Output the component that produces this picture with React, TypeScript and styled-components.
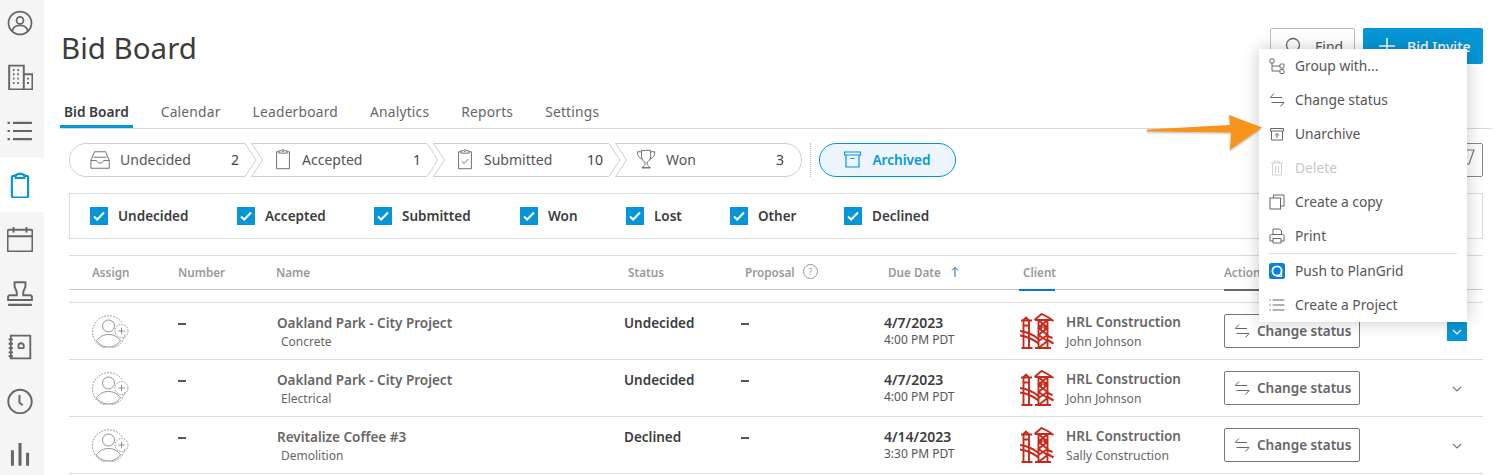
import React from 'react';
import styled, { createGlobalStyle } from 'styled-components';

const GlobalStyle = createGlobalStyle`
  html, body { margin: 0; padding: 0; background: #fff; }
  body { font-family: "Noto Sans", "Open Sans", sans-serif; color: #3c3c3c; }
`;

type IconProps = { size?: number; color?: string; width?: number };

const Svg: React.FC<IconProps & { vb?: number; children: React.ReactNode }> = ({ size = 24, color = '#666', width = 1, vb = 24, children }) => (
  <svg width={size} height={size} viewBox={`0 0 ${vb} ${vb}`} fill="none" stroke={color} strokeWidth={width} style={{ display: 'block', flex: 'none' }}>
    {children}
  </svg>
);

// side navigation
const UserNav = () => (
  <Svg size={26} width={1.6}>
    <circle cx="12" cy="12" r="10.6" />
    <circle cx="12" cy="9.6" r="3.2" />
    <path d="M4.8 19.6c.6-3.6 3.4-5.4 7.2-5.4s6.600 1.800 7.200 5.400" />
  </Svg>
);
const BuildingNav = () => (
  <Svg size={26} width={1.8}>
    <path d="M2 23.500V1.500h13.500v22zM15.500 9.500H23.500v14h-8" />
    <path d="M5.500 5.500h1.500M9.500 5.500h1.500M5.500 9.500h1.500M9.500 9.500h1.500M5.500 13.500h1.500M9.500 13.500h1.500M5.500 17.500h1.500M9.500 17.500h1.500M18.500 13.500h1.800M18.500 17.500h1.800" />
  </Svg>
);
const ListNav = ({ size = 26, width = 2 }: IconProps) => (
  <Svg size={size} width={width}>
    <path d="M.5 4.500h2.200M.5 12h2.200M.5 19.500h2.200M5.500 4.500H23M5.500 12H23M5.500 19.500H23" />
  </Svg>
);
const ClipboardNav = () => (
  <Svg size={26} color="#0696d7" width={2}>
    <path d="M8 3.500H6a1.500 1.500 0 0 0-1.500 1.500v17a1.500 1.500 0 0 0 1.500 1.500h12a1.500 1.500 0 0 0 1.500-1.500V5A1.500 1.500 0 0 0 18 3.500h-2" />
    <path d="M8 5.500V3l2.500-1.200h3L16 3v2.500z" />
  </Svg>
);
const CalendarNav = () => (
  <Svg size={26} width={1.8}>
    <rect x=".5" y="3.500" width="23" height="20" rx="1.500" />
    <path d="M.5 9.500h23M6 1v5M18 1v5" />
  </Svg>
);
const StampNav = () => (
  <Svg size={26} width={1.8}>
    <path d="M7 2h10v3.500c0 2.500-2 3.500-2 6V14h6.500c1 0 1.500.8 1.500 1.800v2.700H1v-2.700C1 14.800 1.500 14 2.500 14H9v-2.500c0-2.500-2-3.500-2-6z" />
    <path d="M1 23h22" strokeWidth="2.200" />
  </Svg>
);
const BookNav = () => (
  <Svg size={26} width={1.7}>
    <path d="M3.500 1.500h18v21h-18z" />
    <path d="M1.500 5h4M1.500 9h4M1.500 13h4M1.500 17h4M1.500 20.500h4" />
    <path d="M10.500 12.500V11a2.500 2.500 0 0 1 5 0v1.500M10 13h6" />
  </Svg>
);
const ClockNav = () => (
  <Svg size={26} width={1.8}>
    <circle cx="12" cy="12.500" r="10.800" />
    <path d="M11.500 6.500v7l3 2.500" />
  </Svg>
);
const BarsNav = () => (
  <Svg size={26} width={2.800}>
    <path d="M5 22V7.500M12 22V1M19 22V10" />
  </Svg>
);

const navItems = [
  { id: 'user', icon: <UserNav /> },
  { id: 'building', icon: <BuildingNav /> },
  { id: 'list', icon: <ListNav /> },
  { id: 'board', icon: <ClipboardNav />, active: true },
  { id: 'calendar', icon: <CalendarNav /> },
  { id: 'stamp', icon: <StampNav /> },
  { id: 'book', icon: <BookNav /> },
  { id: 'clock', icon: <ClockNav /> },
  { id: 'bars', icon: <BarsNav /> },
];

// stage icons
const InboxIcon = () => (
  <Svg size={22} width={1}>
    <path d="M1 21h20v-8.500l-4-9.500H5l-4 9.500zM1 12.500h6c1 2 2 2.800 4 2.800s3-.8 4-2.800h6M4 9H18" />
  </Svg>
);
const ClipIcon = ({ check }: { check?: boolean }) => (
  <Svg size={22} width={1}>
    <path d="M7.500 3H5v18.500h14V3h-2.500" />
    <path d="M7.500 4.500V2H10l.8-1h2.400l.8 1h2.500v2.500zM11 2.500h2" />
    {check && <path d="M8.500 13.500l2.500 2.500 4.500-5" />}
  </Svg>
);
const TrophyIcon = () => (
  <Svg size={22} width={1}>
    <path d="M6 1.500h10v6.500c0 3.500-2 5.500-3.800 6.200v2.800l3.300 3.500H6.500l3.300-3.500v-2.800C8 13.500 6 11.500 6 8z" />
    <path d="M6 3H1.500c0 4 1.500 7 5.500 8M16 3h4.500c0 4-1.500 7-5.500 8M6.500 20.500h9" />
  </Svg>
);
const ArchiveIcon = () => (
  <Svg size={17} color="#0696d7" vb={17} width={1.200}>
    <path d="M.5 1h16v3H.5zM2 4v12h13V4M6.500 7.500h4" />
  </Svg>
);

// menu and buttons
const SwapIcon = () => (
  <Svg size={16} vb={16} width={1}>
    <path d="M13 5.500H1.500M5 1.500L1.200 5.500M2.500 10.500h12.500M11.500 14.500l3.500-4" />
  </Svg>
);
const GroupIcon = () => (
  <Svg size={16} vb={16} width={1}>
    <rect x="1" y="1" width="4" height="4" rx=".8" />
    <rect x="11" y="6" width="4" height="4" rx=".8" />
    <rect x="11" y="11.500" width="4" height="4" rx=".8" />
    <path d="M3 5v8h8M3 8h8" />
  </Svg>
);
const UnarchiveIcon = () => (
  <Svg size={16} vb={16} width={1}>
    <path d="M1.500 2.500h13v2.500h-13zM2.500 5v9h11V5M8 12V7.500M6 9.500l2-2 2 2" />
  </Svg>
);
const TrashIcon = () => (
  <Svg size={16} vb={16} color="#d2d2d2" width={1}>
    <path d="M2 3h12M5.500 3V1.200h5V3M3.500 3v12h9V3M6.500 5.500V13M9.500 5.500V13" />
  </Svg>
);
const CopyIcon = () => (
  <Svg size={16} vb={16} width={1}>
    <rect x="1" y="4" width="10.500" height="11" />
    <path d="M4.500 4V1H15v11h-3.500" />
  </Svg>
);
const PrintIcon = () => (
  <Svg size={16} vb={16} width={1}>
    <path d="M4 6.500V1h6.500L12.500 3v3.500M4 13H1v-5c0-1 .6-1.500 1.500-1.500h11c.9 0 1.500.5 1.500 1.500v5h-3M4 10.500h8V15H4z" />
  </Svg>
);
const PlanGridIcon = () => (
  <svg width="16" height="16" viewBox="0 0 16 16" style={{ display: 'block', flex: 'none' }}>
    <rect width="16" height="16" rx="2.500" fill="#0b7fde" />
    <circle cx="8" cy="8" r="4.600" fill="none" stroke="#fff" strokeWidth="1.800" />
    <path d="M12.500 8v5.500H8" fill="none" stroke="#fff" strokeWidth="1.200" />
  </svg>
);

// bridge logo for the client column
const BridgeLogo = () => (
  <LogoSvg width="34" height="36" viewBox="0 0 34 36" fill="none" stroke="#c62a1c" strokeWidth="1.900">
    <path d="M1 7.500h11M3 7.500l3-3 3 3M3.500 7.500V35M9 7.500V35M1.500 35h11M3.500 12.500H9" />
    <path d="M14.500 7l7-6 7 3.500 5 3.500M15 7h17M18.500 7v28M27.500 7v28M15 35h16M18.500 7l9 8-9 7 9 6-9 7M27.500 7l-9 8 9 7-9 6" />
    <path d="M0 18c6 .8 13 3.500 18.500 8M0 22.500c6 .8 13 3.500 18.500 8M27.500 27l6 3.500M27.500 23l5 2" strokeWidth="2.100" />
    <circle cx="20.500" cy="14" r="1.400" />
    <circle cx="25.500" cy="14" r="1.400" />
  </LogoSvg>
);

// dashed avatar with a plus badge
const AssignIcon = () => (
  <svg width="37" height="34" viewBox="0 0 37 34" fill="none" stroke="#777" strokeWidth=".8" style={{ display: 'block', flex: 'none' }}>
    <path d="M30 8.500A16.300 16.300 0 1 0 32.800 21" strokeDasharray="1.800 1.200" />
    <circle cx="29.500" cy="17" r="6.500" strokeDasharray="1.500 1.200" />
    <path d="M29.500 13.800v6.400M26.300 17h6.400" />
    <circle cx="16.500" cy="12" r="6" />
    <path d="M4.500 27c3-4.500 7-6.500 12-6.500s9 2 12 6.500c-3.500 4-7 6-12 6s-8.500-2-12-6z" />
  </svg>
);

const stages = [
  { label: 'Undecided', count: '2', width: 188, icon: <InboxIcon />, kind: 'first' as const },
  { label: 'Accepted', count: '1', width: 188, icon: <ClipIcon />, kind: 'mid' as const },
  { label: 'Submitted', count: '10', width: 188, icon: <ClipIcon check />, kind: 'mid' as const },
  { label: 'Won', count: '3', width: 187, icon: <TrophyIcon />, kind: 'last' as const },
];

const filters = [
  { label: 'Undecided', gap: 119 },
  { label: 'Accepted', gap: 109 },
  { label: 'Submitted', gap: 118 },
  { label: 'Won', gap: 78 },
  { label: 'Lost', gap: 76 },
  { label: 'Other', gap: 86 },
  { label: 'Declined', gap: 0 },
];

const tabs = ['Bid Board', 'Calendar', 'Leaderboard', 'Analytics', 'Reports', 'Settings'];

const rows = [
  { name: 'Oakland Park - City Project', trade: 'Concrete', status: 'Undecided', date: '4/7/2023', time: '4:00 PM PDT', contact: 'John Johnson', open: true },
  { name: 'Oakland Park - City Project', trade: 'Electrical', status: 'Undecided', date: '4/7/2023', time: '4:00 PM PDT', contact: 'John Johnson' },
  { name: 'Revitalize Coffee #3', trade: 'Demolition', status: 'Declined', date: '4/14/2023', time: '3:30 PM PDT', contact: 'Sally Construction' },
];

const menuItems = [
  { label: 'Group with...', icon: <GroupIcon /> },
  { label: 'Change status', icon: <SwapIcon /> },
  { label: 'Unarchive', icon: <UnarchiveIcon /> },
  { label: 'Delete', icon: <TrashIcon />, disabled: true },
  { label: 'Create a copy', icon: <CopyIcon /> },
  { label: 'Print', icon: <PrintIcon />, divider: true },
  { label: 'Push to PlanGrid', icon: <PlanGridIcon /> },
  { label: 'Create a Project', icon: <ListNav size={16} width={1.600} /> },
];

const stagePath = (kind: 'first' | 'mid' | 'last', w: number) => {
  const h = 33.5;
  if (kind === 'first') return `M17 .5H${w - 12}L${w - 1} 17 ${w - 12} ${h}H17A16.500 16.500 0 0 1 17 .5Z`;
  if (kind === 'last') return `M.5 .5H${w - 17}A16.500 16.500 0 0 1 ${w - 17} ${h}H.5L11.500 17Z`;
  return `M.5 .5H${w - 12}L${w - 1} 17 ${w - 12} ${h}H.5L11.500 17Z`;
};

const App: React.FC = () => (
  <>
    <GlobalStyle />
    <Page>
      <SideNav>
        {navItems.map((item) => (
          <NavItem key={item.id} $active={item.active}>
            {item.icon}
          </NavItem>
        ))}
      </SideNav>
      <Main>
        <Header>
          <Title>Bid Board</Title>
          <HeaderActions>
            <FindButton>
              <Svg size={18} vb={18} width={1.300}>
                <circle cx="8" cy="8" r="6.500" />
                <path d="M13 13l4 4" />
              </Svg>
              Find
            </FindButton>
            <InviteButton>
              <Svg size={18} vb={18} color="#fff" width={1.500}>
                <path d="M9 1v16M1 9h16" />
              </Svg>
              Bid Invite
            </InviteButton>
          </HeaderActions>
        </Header>
        <Tabs>
          {tabs.map((tab, i) => (
            <Tab key={tab} $active={i === 0}>
              {tab}
            </Tab>
          ))}
        </Tabs>
        <Content>
          <StageRow>
            <Stages>
              {stages.map((s) => (
                <Stage key={s.label} $width={s.width}>
                  <StageOutline width={s.width} height="34" viewBox={`0 0 ${s.width} 34`}>
                    <path d={stagePath(s.kind, s.width)} fill="#fff" stroke="#cfcfcf" />
                  </StageOutline>
                  <StageIcon>{s.icon}</StageIcon>
                  <StageLabel>{s.label}</StageLabel>
                  <StageCount>{s.count}</StageCount>
                </Stage>
              ))}
            </Stages>
            <DottedRule />
            <ArchivedPill>
              <ArchiveIcon />
              Archived
            </ArchivedPill>
            <FilterButton>
              <Svg size={24} vb={24} width={1.200} color="#777">
                <path d="M1 2h22l-5 14h-5v6h-2v-6H6z" />
              </Svg>
            </FilterButton>
          </StageRow>
          <FilterBox>
            {filters.map((f) => (
              <FilterItem key={f.label} $gap={f.gap}>
                <CheckBox>
                  <svg width="12" height="10" viewBox="0 0 12 10" fill="none" stroke="#fff" strokeWidth="2">
                    <path d="M1 5.500l3.200 3L11 1.500" />
                  </svg>
                </CheckBox>
                <FilterLabel>{f.label}</FilterLabel>
              </FilterItem>
            ))}
          </FilterBox>
          <TableHead>
            <HeadCell>Assign</HeadCell>
            <HeadCell>Number</HeadCell>
            <HeadCell>Name</HeadCell>
            <HeadCell>Status</HeadCell>
            <HeadCell>
              Proposal
              <HelpMark>?</HelpMark>
            </HeadCell>
            <HeadCell>
              Due Date
              <Svg size={12} vb={12} color="#0a6fc2" width={1}>
                <path d="M6 11V1.500M3 4.500l3-3 3 3" />
              </Svg>
            </HeadCell>
            <HeadCell $underline="#0a78c8">Client</HeadCell>
            <HeadCell $underline="#666">Action</HeadCell>
          </TableHead>
          <TableBody>
            {rows.map((r) => (
              <Row key={r.trade}>
                <AssignIcon />
                <Dash />
                <TextStack>
                  <RowTitle>{r.name}</RowTitle>
                  <RowSub>{r.trade}</RowSub>
                </TextStack>
                <StatusText>{r.status}</StatusText>
                <Dash />
                <TextStack>
                  <DateText>{r.date}</DateText>
                  <TimeText>{r.time}</TimeText>
                </TextStack>
                <ClientCell>
                  <BridgeLogo />
                  <ClientStack>
                    <RowTitle>HRL Construction</RowTitle>
                    <ContactText>{r.contact}</ContactText>
                  </ClientStack>
                </ClientCell>
                <ActionCell>
                  <ChangeButton>
                    <SwapIcon />
                    Change status
                  </ChangeButton>
                  <Expander $open={r.open}>
                    <svg width="10" height="6" viewBox="0 0 10 6" fill="none" stroke={r.open ? '#fff' : '#777'} strokeWidth="1.200">
                      <path d="M1 1l4 4 4-4" />
                    </svg>
                  </Expander>
                </ActionCell>
              </Row>
            ))}
          </TableBody>
        </Content>
      </Main>
      <Menu>
        {menuItems.map((m) => (
          <MenuItem key={m.label} $disabled={m.disabled} $divider={m.divider}>
            {m.icon}
            <MenuLabel>{m.label}</MenuLabel>
          </MenuItem>
        ))}
      </Menu>
      <Pointer width="122" height="42" viewBox="0 0 122 42">
        <defs>
          <filter id="arrow-shadow" x="-5%" y="-10%" width="110%" height="125%">
            <feDropShadow dx="0" dy="1" stdDeviation="1" floodColor="#000" floodOpacity=".3" />
          </filter>
        </defs>
        <path d="M1 17.500L84 13 83 3 116 15.500 84 38 85 20.500 1 19.500Z" fill="#f7941d" filter="url(#arrow-shadow)" />
      </Pointer>
    </Page>
  </>
);

export default App;

const Page = styled.div`
  position: relative;
  display: flex;
  width: 1506px;
  height: 475px;
  overflow: hidden;
  background: #fff;
`;

const SideNav = styled.nav`
  flex: none;
  width: 44px;
  margin-top: -4px;
  background: #f5f5f5;
`;

const NavItem = styled.div<{ $active?: boolean }>`
  display: flex;
  align-items: center;
  justify-content: center;
  height: 54px;
  padding-right: 4px;
  box-sizing: border-box;
  background: ${(p) => (p.$active ? '#fff' : 'transparent')};
`;

const Main = styled.main`
  flex: none;
  width: 1448px;
  padding-left: 16px;
  box-sizing: border-box;
`;

const Header = styled.header`
  display: flex;
  align-items: flex-start;
  justify-content: space-between;
  width: 1423px;
  height: 96px;
  padding-top: 28px;
  box-sizing: border-box;
`;

const Title = styled.h1`
  margin: 0 0 0 1px;
  font-size: 29.5px;
  font-weight: 400;
  line-height: 40px;
  color: #3c3c3c;
`;

const HeaderActions = styled.div`
  display: flex;
  gap: 8px;
`;

const FindButton = styled.button`
  display: flex;
  align-items: center;
  gap: 12px;
  width: 85px;
  height: 36px;
  padding: 0 14px;
  box-sizing: border-box;
  border: 1px solid #bbb;
  border-radius: 2px;
  background: #fff;
  color: #555;
  font: 400 14px "Noto Sans", sans-serif;
  white-space: nowrap;
`;

const InviteButton = styled.button`
  display: flex;
  align-items: center;
  gap: 11px;
  width: 120px;
  height: 36px;
  padding: 0 15px;
  box-sizing: border-box;
  border: none;
  border-radius: 2px;
  background: #0696d7;
  color: #fff;
  font: 500 14px "Noto Sans", sans-serif;
  white-space: nowrap;
`;

const Tabs = styled.div`
  display: flex;
  width: 1432px;
  height: 33px;
  box-sizing: border-box;
  border-bottom: 1px solid #d8d8d8;
`;

const Tab = styled.div<{ $active?: boolean }>`
  height: 32px;
  margin-right: 24px;
  padding: 0 4px;
  box-sizing: border-box;
  border-bottom: 3px solid ${(p) => (p.$active ? '#0696d7' : 'transparent')};
  font-size: ${(p) => (p.$active ? 13.7 : 13.8)}px;
  font-weight: ${(p) => (p.$active ? 600 : 400)};
  line-height: 32px;
  letter-spacing: ${(p) => (p.$active ? 0 : 0.2)}px;
  color: ${(p) => (p.$active ? '#3c3c3c' : '#666')};
`;

const Content = styled.div`
  width: 1414px;
  margin-left: 9px;
`;

const StageRow = styled.div`
  display: flex;
  align-items: center;
  height: 34px;
  margin-top: 14px;
`;

const Stages = styled.div`
  display: flex;
  width: 733px;
`;

const Stage = styled.div<{ $width: number }>`
  position: relative;
  display: flex;
  align-items: center;
  flex: none;
  width: ${(p) => p.$width}px;
  height: 34px;
  margin-right: -6px;
  padding-left: 21px;
  padding-right: 18px;
  box-sizing: border-box;
`;

const StageOutline = styled.svg`
  position: absolute;
  top: 0;
  left: 0;
`;

const StageIcon = styled.span`
  position: relative;
  margin-right: 8px;
`;

const StageLabel = styled.span`
  position: relative;
  flex: 1;
  padding-bottom: 2px;
  font-size: 14px;
  color: #555;
`;

const StageCount = styled.span`
  position: relative;
  padding-bottom: 2px;
  font-size: 14px;
  color: #444;
`;

const DottedRule = styled.div`
  width: 0;
  height: 34px;
  margin-left: 8px;
  border-left: 1px dotted #bbb;
`;

const ArchivedPill = styled.button`
  display: flex;
  align-items: center;
  justify-content: center;
  gap: 11px;
  width: 137px;
  height: 34px;
  margin-left: 8px;
  padding: 0 0 1px;
  box-sizing: border-box;
  border: 1px solid #0696d7;
  border-radius: 17px;
  background: #edf6fd;
  color: #0696d7;
  font: 600 13.6px "Noto Sans", sans-serif;
`;

const FilterButton = styled.div`
  display: flex;
  align-items: center;
  justify-content: center;
  width: 40px;
  height: 34px;
  margin-left: auto;
  box-sizing: border-box;
  border: 1px solid #888;
  border-radius: 2px;
`;

const FilterBox = styled.div`
  display: flex;
  align-items: center;
  height: 46px;
  margin-top: 16px;
  padding-left: 20px;
  box-sizing: border-box;
  border: 1px solid #ddd;
`;

const FilterItem = styled.div<{ $gap: number }>`
  display: flex;
  align-items: center;
  gap: 10px;
  width: ${(p) => (p.$gap ? `${p.$gap + 28}px` : 'auto')};
`;

const FilterLabel = styled.span`
  padding-bottom: 1px;
  font-size: 13.5px;
  font-weight: 600;
  color: #3c3c3c;
`;

const CheckBox = styled.span`
  display: flex;
  align-items: center;
  justify-content: center;
  flex: none;
  width: 18px;
  height: 18px;
  background: #0696d7;
`;

const TableHead = styled.div`
  display: grid;
  grid-template-columns: 86px 98px 352px 117px 143px 135px 201px 1fr;
  height: 35px;
  margin-top: 16px;
  padding-left: 23px;
  box-sizing: border-box;
  border-top: 1px solid #ddd;
  border-bottom: 1px solid #ccc;
`;

const HeadCell = styled.div<{ $underline?: string }>`
  position: relative;
  display: flex;
  align-items: center;
  gap: 8px;
  padding-bottom: 2px;
  font-size: 11.7px;
  font-weight: 600;
  color: #999;

  &::after {
    content: '';
    display: ${(p) => (p.$underline ? 'block' : 'none')};
    position: absolute;
    left: ${(p) => (p.$underline === '#666' ? 0 : -4)}px;
    bottom: -2px;
    width: ${(p) => (p.$underline === '#666' ? 130 : 36)}px;
    height: 2px;
    background: ${(p) => p.$underline};
  }
`;

const HelpMark = styled.span`
  display: flex;
  align-items: center;
  justify-content: center;
  width: 13px;
  height: 13px;
  border: 1px solid #999;
  border-radius: 50%;
  font-size: 9px;
  font-weight: 400;
`;

const TableBody = styled.div`
  margin-top: 12px;
  border-top: 1px solid #ddd;
`;

const Row = styled.div`
  display: grid;
  grid-template-columns: 86px 99px 347px 117px 143px 136px 204px 1fr;
  align-items: start;
  height: 57px;
  padding-left: 23px;
  padding-top: 11px;
  box-sizing: border-box;
  border-bottom: 1px solid #ddd;
`;

const Dash = styled.div`
  width: 8px;
  height: 2px;
  margin-top: 9px;
  background: #555;
`;

const TextStack = styled.div`
  margin-top: -1px;
`;

const ClientStack = styled.div`
  margin-top: -2px;
`;

const RowTitle = styled.div`
  font-size: 13.5px;
  font-weight: 600;
  line-height: 20px;
  white-space: nowrap;
  color: #666;
`;

const RowSub = styled.div`
  margin-left: 4px;
  font-size: 12px;
  line-height: 18px;
  color: #666;
`;

const StatusText = styled.div`
  margin-top: -1px;
  font-size: 13.5px;
  font-weight: 600;
  line-height: 20px;
  color: #3c3c3c;
`;

const DateText = styled.div`
  font-size: 14px;
  font-weight: 600;
  line-height: 20px;
  color: #3c3c3c;
`;

const TimeText = styled.div`
  font-size: 12px;
  line-height: 14px;
  color: #555;
`;

const ClientCell = styled.div`
  display: flex;
  gap: 12px;
`;

const LogoSvg = styled.svg`
  display: block;
  flex: none;
  margin-top: -1px;
`;

const ContactText = styled.div`
  font-size: 12.2px;
  line-height: 19px;
  white-space: nowrap;
  color: #666;
`;

const ActionCell = styled.div`
  display: flex;
  align-items: flex-start;
  justify-content: space-between;
  width: 243px;
`;

const ChangeButton = styled.button`
  display: flex;
  align-items: center;
  gap: 7px;
  width: 136px;
  height: 34px;
  padding: 0 9px;
  box-sizing: border-box;
  border: 1px solid #777;
  border-radius: 2px;
  background: #fff;
  color: #666;
  font: 600 13.5px "Noto Sans", sans-serif;
  white-space: nowrap;
`;

const Expander = styled.span<{ $open?: boolean }>`
  display: flex;
  align-items: center;
  justify-content: center;
  width: 20px;
  height: 19px;
  margin-top: 8px;
  background: ${(p) => (p.$open ? '#0696d7' : 'transparent')};
`;

const Menu = styled.div`
  position: absolute;
  top: 49px;
  left: 1259px;
  width: 208px;
  height: 273px;
  background: #fff;
  box-shadow: 0 0 16px rgba(0, 0, 0, 0.22);
`;

const MenuItem = styled.div<{ $disabled?: boolean; $divider?: boolean }>`
  position: relative;
  display: flex;
  align-items: center;
  gap: 10px;
  height: ${(p) => (p.$divider ? 35 : 34)}px;
  padding-left: 10px;
  padding-bottom: ${(p) => (p.$divider ? 1 : 0)}px;
  box-sizing: border-box;
  font-size: 13.8px;
  color: ${(p) => (p.$disabled ? '#c8c8c8' : '#555')};

  &::after {
    content: '';
    display: ${(p) => (p.$divider ? 'block' : 'none')};
    position: absolute;
    left: 10px;
    right: 10px;
    bottom: 0;
    height: 1px;
    background: #ddd;
  }
`;

const MenuLabel = styled.span`
  padding-bottom: 2px;
`;

const Pointer = styled.svg`
  position: absolute;
  top: 112px;
  left: 1146px;
`;
